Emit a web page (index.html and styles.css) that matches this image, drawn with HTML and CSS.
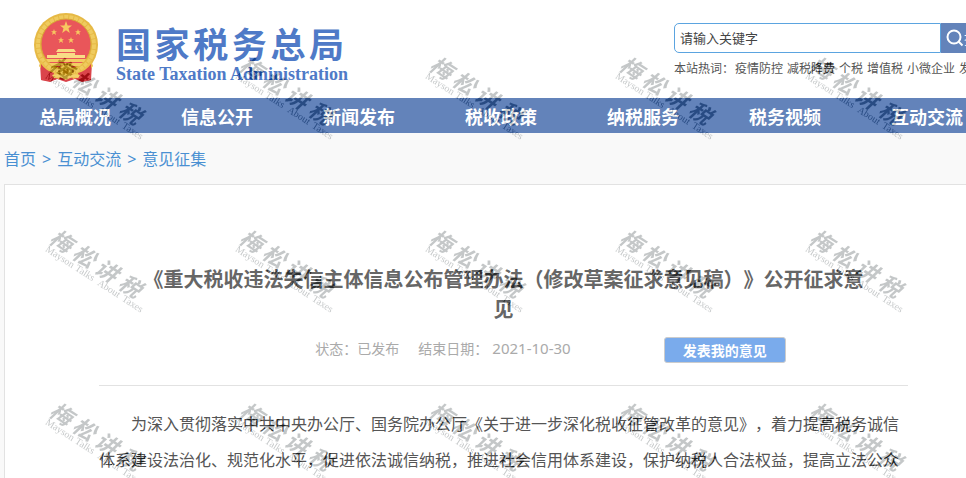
FILE: index.html
```html
<!DOCTYPE html>
<html lang="zh-CN">
<head>
    <meta charset="UTF-8">
    <meta name="viewport" content="width=device-width, initial-scale=1.0">
    <title>意见征集 - 国家税务总局</title>
    <link rel="stylesheet" href="styles.css">
</head>
<body>
    <div class="page">
        <!-- Header -->
        <header class="header">
            <a class="logo" href="#">
                <svg class="emblem" viewBox="0 0 64 70" aria-hidden="true">
                    <path d="M9 48 L6 50 L7 67 L16 69 L23 66 L32 69 L41 66 L48 69 L57 67 L58 50 L55 48 Z" fill="#d9434a"/>
                    <circle cx="32" cy="32" r="32" fill="#e6b945"/>
                    <circle cx="32" cy="32" r="28" fill="none" stroke="#efcb5f" stroke-width="4" stroke-dasharray="4 1"/>
                    <circle cx="32" cy="31" r="25" fill="#e9565a" stroke="#d9a637" stroke-width="1"/>
                    <path d="M32 8 L33.600 12.500 L38 12.500 L34.500 15.300 L35.800 20 L32 17.300 L28.200 20 L29.500 15.300 L26 12.500 L30.400 12.500 Z" fill="#f7c860"/>
                    <g fill="#f7c860">
                        <path id="star" d="M20 16 L20.800 18.200 L23 18.200 L21.300 19.600 L22 22 L20 20.600 L18 22 L18.700 19.600 L17 18.200 L19.200 18.200 Z"/>
                        <use href="#star" x="24"/>
                        <use href="#star" x="7" y="8"/>
                        <use href="#star" x="17" y="8"/>
                    </g>
                    <path d="M24 36 H40 L42 39 H22 Z M23 40 H41 V42 H51 V45 H13 V42 H23 Z" fill="#f9dc86"/>
                    <path d="M12 46 H52 L50 49 H14 Z M15 50 H49 L46 53 H18 Z" fill="#f3cd62"/>
                    <path d="M7 47 Q15 60 27 61 L25 66 Q11 63 5 53 Z M57 47 Q49 60 37 61 L39 66 Q53 63 59 53 Z" fill="#ecc04d"/>
                    <path d="M7 51 Q12 58 20 60 L18 68 L7 67 Z M57 51 Q52 58 44 60 L46 68 L57 67 Z" fill="#db454b"/>
                    <circle cx="32" cy="58" r="7" fill="#edc453" stroke="#c4902c" stroke-width="2" stroke-dasharray="2 1"/>
                    <circle cx="32" cy="58" r="3" fill="#d9a637"/>
                    <path d="M18 62 Q25 60 32 63 Q39 60 46 62 L44 65 Q38 63 32 67 Q26 63 20 65 Z" fill="#f3d06a"/>
                </svg>
                <span class="logo-text">
                    <span class="logo-name">国家税务总局</span>
                    <span class="logo-en">State Taxation Administration</span>
                </span>
            </a>

            <div class="search">
                <form class="search-form">
                    <input class="search-input" type="text" aria-label="搜索关键字" placeholder="请输入关键字">
                    <button class="search-btn" type="submit">
                        <svg class="search-icon" viewBox="0 0 18 18" aria-hidden="true">
                            <circle cx="8" cy="8" r="6.500"/>
                            <path d="M12.500 12.500 L16.500 16.500"/>
                        </svg>
                        搜索
                    </button>
                </form>
                <div class="hot-words">
                    <span>本站热词：</span>
                    <div class="hot-links">
                        <a href="#">疫情防控</a>
                        <a href="#">减税降费</a>
                        <a href="#">个税</a>
                        <a href="#">增值税</a>
                        <a href="#">小微企业</a>
                        <a href="#">发票</a>
                    </div>
                </div>
            </div>
        </header>

        <!-- Main navigation -->
        <nav class="nav">
            <a href="#">总局概况</a>
            <a href="#">信息公开</a>
            <a href="#">新闻发布</a>
            <a href="#">税收政策</a>
            <a href="#">纳税服务</a>
            <a href="#">税务视频</a>
            <a href="#">互动交流</a>
        </nav>

        <div class="breadcrumb">
            <a href="#">首页</a>
            <span>&gt;</span>
            <a href="#">互动交流</a>
            <span>&gt;</span>
            <a href="#">意见征集</a>
        </div>

        <!-- Article -->
        <main class="article">
            <h1>《重大税收违法失信主体信息公布管理办法（修改草案征求意见稿）》公开征求意见</h1>
            <div class="meta">
                <span>状态：已发布</span>
                <span class="deadline">结束日期：<time datetime="2021-10-30">2021-10-30</time></span>
                <button class="opinion-btn" type="button">发表我的意见</button>
            </div>
            <p>为深入贯彻落实中共中央办公厅、国务院办公厅《关于进一步深化税收征管改革的意见》，着力提高税务诚信体系建设法治化、规范化水平，促进依法诚信纳税，推进社会信用体系建设，保护纳税人合法权益，提高立法公众</p>
        </main>
    </div>

    <!-- Repeating watermark -->
    <svg class="watermark" width="100%" height="100%" aria-hidden="true">
        <defs>
            <pattern id="mark" x="41" y="45" width="190" height="173" patternUnits="userSpaceOnUse">
                <g transform="translate(22 23) rotate(33)">
                    <text class="mark-name" x="-12 15 42 70" y="9">梅松讲税</text>
                    <text class="mark-en" y="18"><tspan x="-10">Mayson</tspan><tspan x="25">Talks</tspan><tspan x="52">About</tspan><tspan x="81">Taxes</tspan></text>
                </g>
            </pattern>
        </defs>
        <rect width="100%" height="100%" fill="url(#mark)"/>
    </svg>
</body>
</html>
```
FILE: styles.css
```css
* {
    box-sizing: border-box;
}

body {
    margin: 0;
    overflow: hidden;
    background-color: #f9f9f9;
    color: #555;
    font-family: "Noto Sans", "Noto Sans CJK SC", sans-serif;
    font-size: 16px;
    text-spacing-trim: space-all;
}

a {
    color: inherit;
    text-decoration: none;
}

button,
input {
    font-family: inherit;
}

.page {
    min-width: 1006px;
}

/* Header */
.header {
    display: flex;
    justify-content: space-between;
    height: 98px;
    padding-left: 34px;
    background-color: #fff;
}

.logo {
    display: flex;
    gap: 18px;
    padding-top: 13px;
    color: #4f7ac7;
}

.emblem {
    width: 64px;
    height: 70px;
}

.logo-text {
    display: flex;
    flex-direction: column;
    width: 228px;
    padding-top: 12px;
}

.logo-name {
    font-size: 35px;
    font-weight: bold;
    line-height: 40px;
    text-align-last: justify;
}

.logo-en {
    font-family: "Liberation Serif", serif;
    font-size: 18px;
    font-weight: bold;
    line-height: 18px;
    white-space: nowrap;
}

/* Search box */
.search {
    width: 332px;
    padding-top: 23px;
}

.search-form {
    display: flex;
    height: 30px;
}

.search-input {
    flex: 1;
    min-width: 0;
    padding: 0 5px;
    border: 1px solid #5ba4e0;
    border-radius: 5px 0 0 5px;
    font-size: 13px;
}

.search-input::placeholder {
    color: #444;
}

.search-btn {
    display: flex;
    align-items: center;
    width: 65px;
    padding: 0 5px;
    border: 0;
    background-color: #6383ba;
    color: #fff;
    font-size: 14px;
    white-space: nowrap;
}

.search-icon {
    flex: none;
    width: 18px;
    height: 18px;
    fill: none;
    stroke: #fff;
    stroke-width: 2;
}

.hot-words {
    display: flex;
    gap: 1px;
    padding-top: 6px;
    font-size: 12px;
    line-height: 20px;
    white-space: nowrap;
}

.hot-links {
    display: flex;
    gap: 4px;
}

/* Navigation */
.nav {
    display: flex;
    padding-left: 4px;
    background-color: #6383ba;
}

.nav a {
    padding: 3px 35px 0;
    color: #fff;
    font-size: 18px;
    font-weight: bold;
    line-height: 32px;
    white-space: nowrap;
}

.breadcrumb {
    display: flex;
    gap: 6px;
    padding: 2px 4px 0;
    color: #4a90d2;
    line-height: 49px;
}

/* Article */
.article {
    margin: 0 2px 0 4px;
    padding: 80px 95px 60px 94px;
    border: 1px solid #e2e2e2;
    background-color: #fff;
}

.article h1 {
    margin: 0;
    padding: 0 40px;
    color: #666;
    font-size: 20px;
    line-height: 30px;
    text-align: center;
}

.meta {
    display: flex;
    align-items: flex-end;
    justify-content: center;
    padding: 9px 0 22px 94px;
    border-bottom: 1px solid #e2e2e2;
    color: #aaa;
    font-size: 14px;
    line-height: 28px;
}

.deadline {
    padding: 0 93px 0 19px;
}

.deadline time {
    padding-left: 4px;
    font-size: 15px;
}

.opinion-btn {
    width: 122px;
    height: 26px;
    padding: 0;
    border: 1px solid #ccc;
    border-radius: 3px;
    background-color: #7aabec;
    color: #fff;
    font-size: 14px;
    font-weight: bold;
}

.article p {
    margin: 20px 0 0;
    padding-right: 8px;
    line-height: 36px;
    text-indent: 2em;
}

/* Watermark laid over the whole page */
.watermark {
    position: fixed;
    top: 0;
    left: 0;
    pointer-events: none;
    mix-blend-mode: difference;
}

.mark-name {
    fill: #3b3837;
    font-size: 22px;
    font-style: italic;
    font-weight: bold;
    font-family: "Noto Sans CJK SC", sans-serif;
}

.mark-en {
    fill: #3b3837;
    font-family: "Liberation Serif", serif;
    font-size: 10px;
}
```
